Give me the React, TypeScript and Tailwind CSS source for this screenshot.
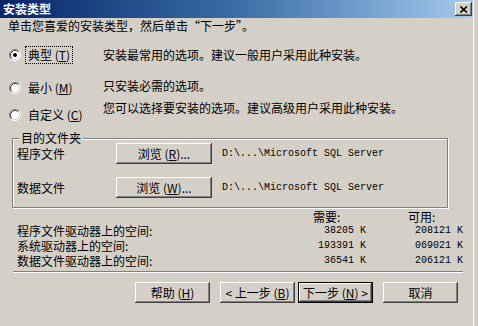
import React from "react";

const BEVEL =
  "shadow-[inset_-1px_-1px_0_#404040,inset_1px_1px_0_#ffffff,inset_-2px_-2px_0_#808080,inset_2px_2px_0_#d4d0c8]";

function Radio({ checked }: { checked?: boolean }) {
  return (
    <svg width="12" height="12" viewBox="0 0 12 12" className="shrink-0">
      <circle cx="6" cy="6" r="5" fill="#ffffff" />
      <path d="M2.11 9.89 A5.5 5.5 0 0 1 9.89 2.11" fill="none" stroke="#808080" />
      <path d="M9.89 2.11 A5.5 5.5 0 0 1 2.11 9.89" fill="none" stroke="#ffffff" />
      <path d="M2.82 9.18 A4.5 4.5 0 0 1 9.18 2.82" fill="none" stroke="#404040" />
      <path d="M9.18 2.82 A4.5 4.5 0 0 1 2.82 9.18" fill="none" stroke="#d4d0c8" />
      {checked && <circle cx="6" cy="6" r="2" fill="#000000" />}
    </svg>
  );
}

function Btn({
  children,
  w = "w-[75px]",
  isDefault,
}: {
  children: React.ReactNode;
  w?: string;
  isDefault?: boolean;
}) {
  return (
    <div
      className={`${w} h-[21px] shrink-0 flex items-center justify-center bg-[#d4d0c8] ${
        isDefault
          ? "outline outline-1 outline-black -outline-offset-1 shadow-[inset_-2px_-2px_0_#404040,inset_2px_2px_0_#ffffff,inset_-3px_-3px_0_#808080]"
          : BEVEL
      }`}
    >
      {children}
    </div>
  );
}

const SPACE = [
  { label: "程序文件驱动器上的空间:", need: "38205 K", free: "208121 K" },
  { label: "系统驱动器上的空间:", need: "193391 K", free: "069021 K" },
  { label: "数据文件驱动器上的空间:", need: "36541 K", free: "206121 K" },
];

const MONO = "font-['Liberation_Mono',monospace] text-[10px]";

export default function App() {
  return (
    <div className="w-[478px] h-[326px] bg-[#d4d0c8] overflow-hidden flex text-[12px] leading-[14px] text-black font-['Noto_Sans_CJK_SC','Noto_Sans',sans-serif]">
      <div className="w-[473px] shrink-0 flex flex-col">
        {/* title bar */}
        <div className="h-[18px] flex items-center justify-between pl-[3px] pr-[1px] bg-gradient-to-r from-[#0a246a] via-[#3a6ea5] to-[#a6caf0]">
          <span className="font-bold text-white text-[12px] leading-[14px]">安装类型</span>
          <div className={`w-[17px] h-[14px] flex items-center justify-center bg-[#d4d0c8] ${BEVEL}`}>
            <svg width="8" height="7" viewBox="0 0 8 7">
              <path d="M0.5 0.5 L7 6.5 M7 0.5 L0.5 6.5" stroke="#000" strokeWidth="1.6" />
            </svg>
          </div>
        </div>

        <p className="mt-[1px] pl-[8px]">单击您喜爱的安装类型，然后单击“下一步”。</p>

        {/* setup types */}
        <div className="mt-[15px] flex">
          <div className="w-[103px] pl-[9px] flex flex-col">
            <div className="h-[14px] flex items-center gap-[6px]">
              <Radio checked />
              <span className="outline outline-1 outline-dotted outline-black outline-offset-[1px] px-[1px]">
                典型 (<u>T</u>)
              </span>
            </div>
            <div className="mt-[19px] h-[14px] flex items-center gap-[6px]">
              <Radio />
              <span className="px-[1px]">
                最小 (<u>M</u>)
              </span>
            </div>
            <div className="mt-[13px] h-[14px] flex items-center gap-[6px]">
              <Radio />
              <span className="px-[1px]">
                自定义 (<u>C</u>)
              </span>
            </div>
          </div>
          <div className="flex flex-col">
            <p>安装最常用的选项。建议一般用户采用此种安装。</p>
            <p className="mt-[17px]">只安装必需的选项。</p>
            <p className="mt-[8px]">您可以选择要安装的选项。建议高级用户采用此种安装。</p>
          </div>
        </div>

        {/* destination folder */}
        <div className="relative mt-[16px] ml-[12px] w-[436px] h-[70px] border border-[#808080] shadow-[1px_1px_0_#ffffff,inset_1px_1px_0_#ffffff] pt-[4px] pl-[4px]">
          <span className="absolute left-[6px] top-[-8px] px-[2px] bg-[#d4d0c8]">目的文件夹</span>
          <div className="h-[21px] flex items-center">
            <span className="w-[99px]">程序文件</span>
            <Btn w="w-[96px]">
              浏览 (<u>R</u>)...
            </Btn>
            <span className={`ml-[10px] ${MONO}`}>D:\...\Microsoft SQL Server</span>
          </div>
          <div className="mt-[13px] h-[21px] flex items-center">
            <span className="w-[99px]">数据文件</span>
            <Btn w="w-[96px]">
              浏览 (<u>W</u>)...
            </Btn>
            <span className={`ml-[10px] ${MONO}`}>D:\...\Microsoft SQL Server</span>
          </div>
        </div>

        {/* disk space */}
        <div className="mt-[2px] pl-[17px] grid grid-cols-[296px_53px_97px]">
          <span />
          <span className="leading-[13px]">需要:</span>
          <span className="leading-[13px] pl-[42px]">可用:</span>
          {SPACE.map((r) => (
            <React.Fragment key={r.label}>
              <span className="leading-[15px] whitespace-nowrap">{r.label}</span>
              <span className={`leading-[15px] text-right whitespace-nowrap ${MONO}`}>{r.need}</span>
              <span className={`leading-[15px] text-right whitespace-nowrap ${MONO}`}>{r.free}</span>
            </React.Fragment>
          ))}
        </div>

        <div className="mt-[3px] ml-[13px] w-[450px] h-[2px] border-t border-[#808080] border-b border-b-white" />

        {/* buttons */}
        <div className="mt-[9px] pl-[135px] flex">
          <Btn>
            帮助 (<u>H</u>)
          </Btn>
          <div className="ml-[10px]">
            <Btn>
              &lt; 上一步 (<u>B</u>)
            </Btn>
          </div>
          <div className="ml-[3px]">
            <Btn isDefault>
              下一步 (<u>N</u>) &gt;
            </Btn>
          </div>
          <div className="ml-[10px]">
            <Btn>取消</Btn>
          </div>
        </div>
      </div>
      <div className="flex-1 border-l border-white bg-[#d4d0c8]" />
    </div>
  );
}
